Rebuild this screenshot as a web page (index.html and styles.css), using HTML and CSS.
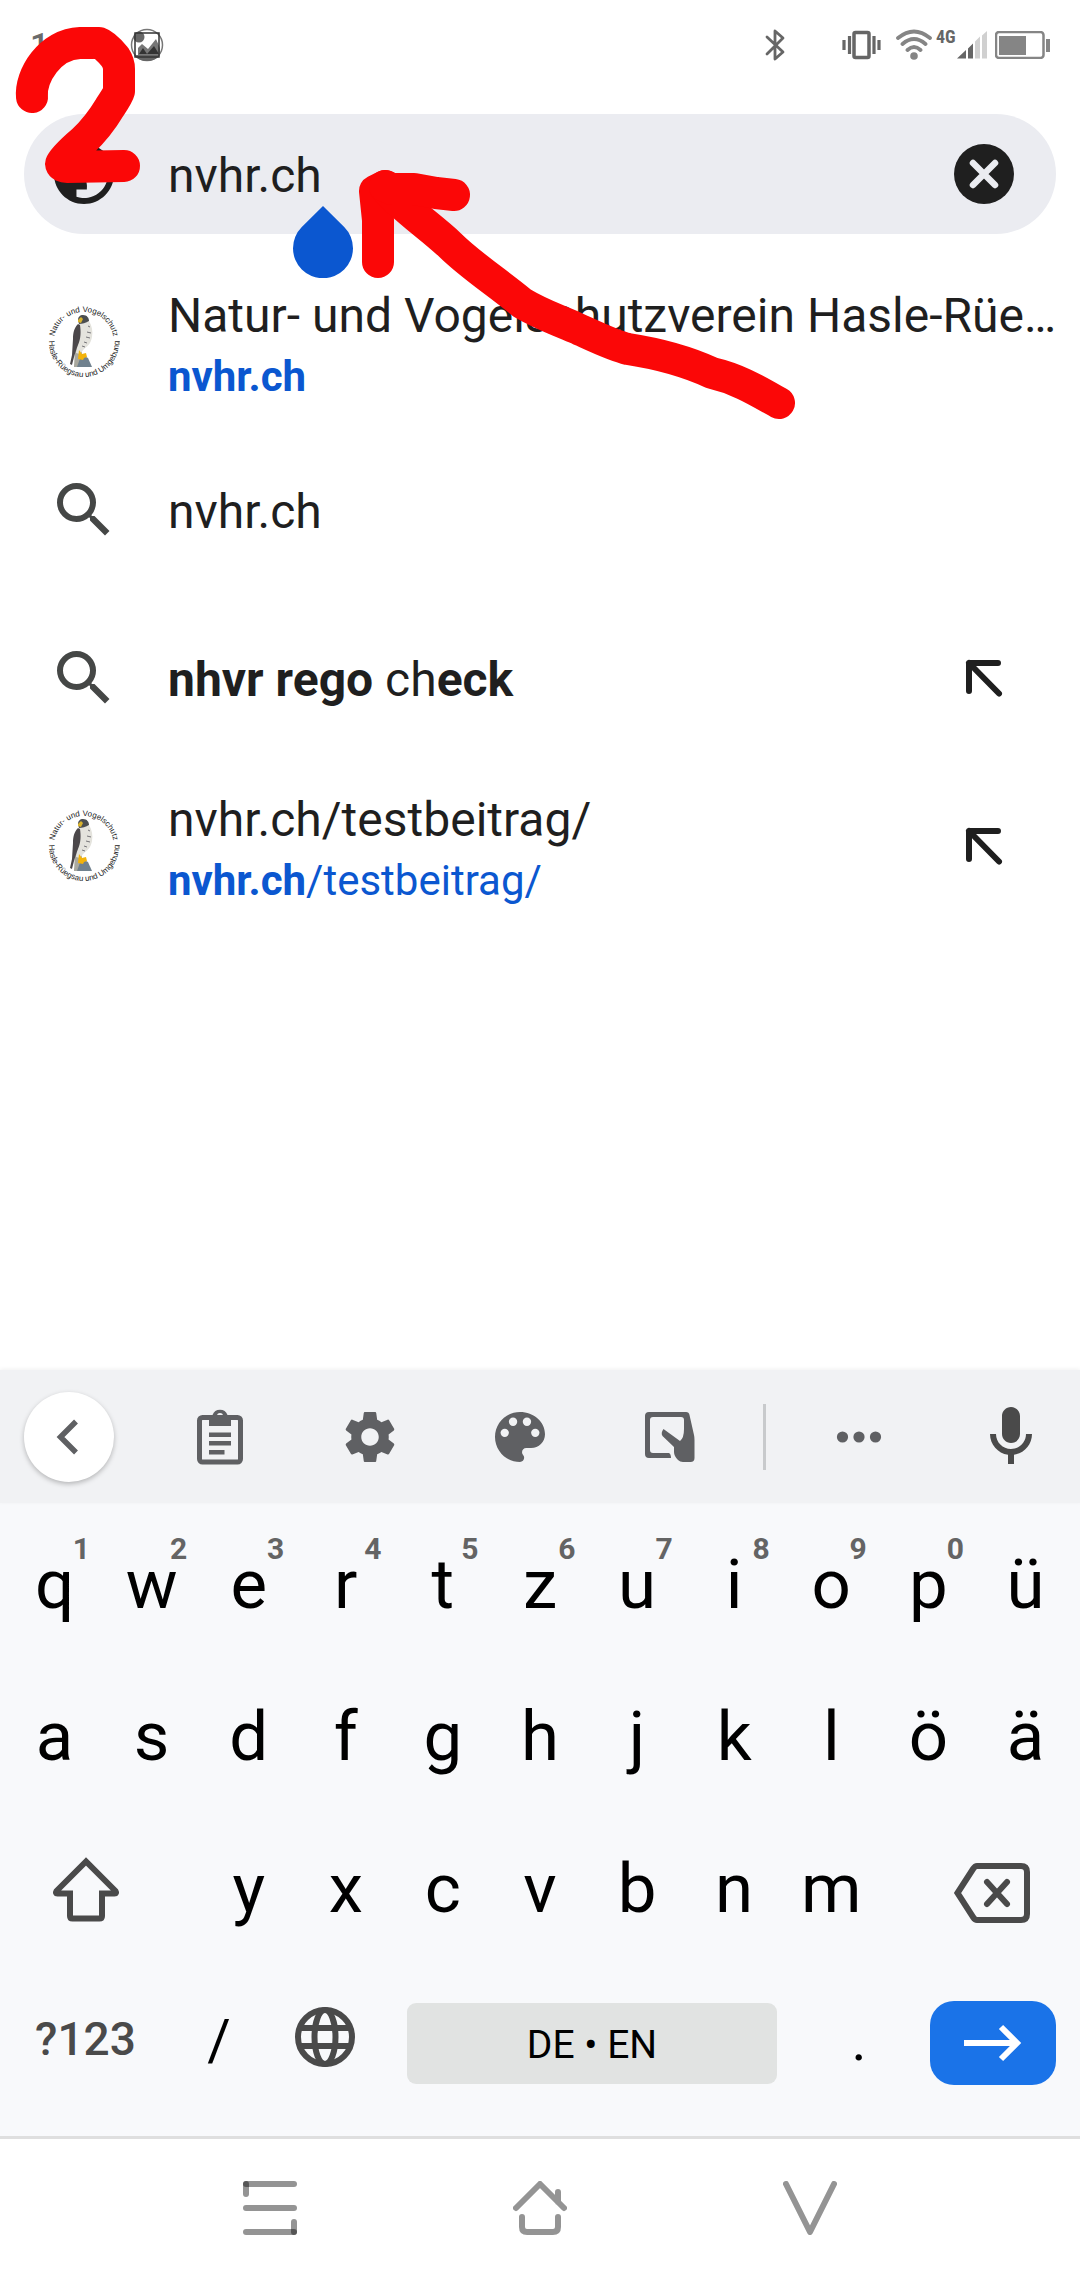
FILE: index.html
```html
<!DOCTYPE html>
<html lang="de">
<head>
<meta charset="utf-8">
<meta name="viewport" content="width=device-width, initial-scale=1">
<title>nvhr.ch</title>
<link rel="stylesheet" href="styles.css">
</head>
<body>
<svg class="defs" aria-hidden="true">
  <defs>
    <symbol id="search" viewBox="0 0 24 24"><path d="M15.500 14h-.79l-.28-.27A6.471 6.471 0 0 0 16 9.500 6.500 6.500 0 1 0 9.500 16c1.610 0 3.090-.59 4.230-1.570l.27.28v.79l5 4.990L20.490 19l-4.990-5zm-6 0C7.010 14 5 11.990 5 9.500S7.010 5 9.500 5 14 7.010 14 9.500 11.990 14 9.500 14z"/></symbol>
    <symbol id="refine" viewBox="0 0 72 72"><path d="M50 21H21v28M21 21l30 30.500" fill="none" stroke="currentColor" stroke-width="6" stroke-linecap="round" stroke-linejoin="round"/></symbol>
    <symbol id="falcon" viewBox="0 0 72 72">
      <path id="arc-top" d="M6 36a30 30 0 0 1 60 0" fill="none"/>
      <path id="arc-bottom" d="M1 36a35 35 0 0 0 70 0" fill="none"/>
      <text class="seal"><textPath href="#arc-top" startOffset="50%">Natur- und Vogelschutz</textPath></text>
      <text class="seal"><textPath href="#arc-bottom" startOffset="50%">Hasle-Rüegsau und Umgebung</textPath></text>
      <path d="M26 61l2-8 6-4 6 3 4 9z" fill="#70818e"/>
      <path d="M26 61l1-18 6-3 1 7-5 14z" fill="#aaa99f"/>
      <path d="M31 18l10-3c3 5 4 10 3 16-1 6-4 9-8 12l-4 5-4-1 1-12z" fill="#e4e3dd"/>
      <path d="M40 20l2 1m-3 5l4 1m-5 4l4 1m-6 4l3 1m-5 3l3 1" stroke="#77767a" stroke-width="1"/>
      <path d="M30 18c-4 4-5 9-5 15l-1 16-2 9 2 1c2-8 3-12 6-20 3-7 3-13 2-20z" fill="#4b474a"/>
      <path d="M30 14c0-3 2-5 5-5 4 0 6 3 6 6-3 2-7 3-10 3z" fill="#4b4e50"/>
      <path d="M30 14l3-3 2 2-2 4-3-1z" fill="#d9b32d"/>
      <path d="M31 44l3 4 4-1 1 4-3 1-1 2-5-1z" fill="#f3b30b"/>
    </symbol>
  </defs>
</svg>

<header class="status">
  <div class="status-left">
    <time class="clock">1</time>
    <svg width="34" height="34" viewBox="0 0 34 34" aria-label="Bild"><circle cx="17" cy="17" r="15.500" fill="#fff" stroke="#777" stroke-width="1.500"/><path d="M4 27h26c-6 8-20 8-26 0z" fill="#666"/><circle cx="9" cy="9" r="5.500" fill="#666"/><path d="M8 27v-7l4-4 6 5 8-10 4 9v7z" fill="#777"/><path d="M9 26l4-6 4 6zm8 0l7-8 5 8z" fill="#333"/><rect x="5" y="5" width="24" height="24" fill="none" stroke="#333" stroke-width="1.500"/></svg>
  </div>
  <div class="status-right">
    <svg class="bluetooth" width="20" height="32" viewBox="0 0 20 32" aria-label="Bluetooth"><path d="M2 8l16 15-8 7V2l8 7L2 25" fill="none" stroke="#666" stroke-width="2.800" stroke-linejoin="round" stroke-linecap="round"/></svg>
    <svg class="vibrate" width="40" height="30" viewBox="0 0 40 30" aria-label="Vibration"><rect x="13" y="2.500" width="15" height="25" rx="1.500" fill="none" stroke="#666" stroke-width="3.500"/><path d="M8.500 6v18M33 6v18M3 10v10M38 10v10" stroke="#666" stroke-width="3.200"/></svg>
    <svg width="38" height="32" viewBox="0 0 38 32" aria-label="WLAN"><g fill="none" stroke="#858585" stroke-width="3.800" stroke-linecap="round"><path d="M3 9q16-13 32 0M7.500 15q11.500-10 23 0M12.500 21q6.500-6 13 0"/></g><circle cx="19" cy="27" r="3.800" fill="#858585"/></svg>
    <span class="network">4G</span>
    <svg class="signal" width="30" height="28" viewBox="0 0 30 28" aria-label="Signal"><path d="M0 27.500l9-8.500v8.500zM11 17.500l5-5v15h-5z" fill="#666"/><path d="M18 10.500l5-5v22h-5zM25 4.500L30 0v27.500h-5z" fill="#d0d0d0"/></svg>
    <svg width="56" height="28" viewBox="0 0 56 28" aria-label="Akku"><rect x="1" y="1" width="47.500" height="26" rx="3" fill="none" stroke="#858585" stroke-width="2.500"/><path d="M4 5h27v19H4zM51 8h4v13h-4z" fill="#858585"/></svg>
  </div>
</header>

<main class="page">
  <form class="omnibox">
    <svg class="icon-72" viewBox="0 0 24 24" aria-hidden="true"><path fill-rule="evenodd" d="M12 2C6.480 2 2 6.480 2 12s4.480 10 10 10 10-4.480 10-10S17.520 2 12 2zM4 12h4.400c3.407.022 4.922 1.730 4.543 5.127H9.488v2.470a8.004 8.004 0 0 0 10.498-8.080C19.327 12.500 18.332 13 17 13c-2.137 0-3.205-.916-3.205-2.750h-3.748c-.274-2.728.683-4.092 2.870-4.092 0-.975.327-1.597.811-1.970A8 8 0 0 0 4 12z"/></svg>
    <input class="url" type="text" value="nvhr.ch" aria-label="Adresse">
    <button class="clear" type="button" aria-label="Löschen"><svg width="60" height="60" viewBox="0 0 60 60"><circle cx="30" cy="30" r="30" fill="#1f1f1f"/><path d="M19 19l22 22M41 19L19 41" stroke="#ebecf1" stroke-width="6.500" stroke-linecap="round"/></svg></button>
    <svg class="handle" width="60" height="72" viewBox="0 0 60 72" aria-hidden="true"><path d="M30 0l21.200 21A30 30 0 1 1 8.800 21z" fill="#0b57d0"/></svg>
  </form>

  <ul class="suggestions">
    <li class="suggestion">
      <svg class="icon-72" aria-hidden="true"><use href="#falcon"/></svg>
      <a class="match" href="#"><span class="title">Natur- und Vogelschutzverein Hasle-Rüe…</span><span class="address"><b>nvhr.ch</b></span></a>
    </li>
    <li class="suggestion">
      <svg class="icon-72" aria-hidden="true"><use href="#search"/></svg>
      <a class="match" href="#"><span class="title">nvhr.ch</span></a>
    </li>
    <li class="suggestion">
      <svg class="icon-72" aria-hidden="true"><use href="#search"/></svg>
      <a class="match" href="#"><span class="title"><b>nhvr rego</b> ch<b>eck</b></span></a>
      <button class="refine" type="button" aria-label="Übernehmen"><svg class="icon-72"><use href="#refine"/></svg></button>
    </li>
    <li class="suggestion">
      <svg class="icon-72" aria-hidden="true"><use href="#falcon"/></svg>
      <a class="match" href="#"><span class="title">nvhr.ch/testbeitrag/</span><span class="address"><b>nvhr.ch</b>/testbeitrag/</span></a>
      <button class="refine" type="button" aria-label="Übernehmen"><svg class="icon-72"><use href="#refine"/></svg></button>
    </li>
  </ul>
</main>

<section class="keyboard" aria-label="Tastatur">
  <div class="toolbar">
    <button class="tool collapse" type="button" aria-label="Zurück"><svg width="60" height="60" viewBox="0 0 60 60"><path d="M37 14.500L21.500 30 37 45.500" fill="none" stroke="#5f6063" stroke-width="5.500"/></svg></button>
    <button class="tool" type="button" aria-label="Zwischenablage"><svg width="60" height="60" viewBox="0 0 60 60"><rect x="9.500" y="10.500" width="41" height="44.500" rx="3" fill="none" stroke="currentColor" stroke-width="5"/><path fill-rule="evenodd" d="M19 19V8h3.500a8 8 0 0 1 15 0H41v11zM30 6a3 3 0 1 0 0 6 3 3 0 0 0 0-6z"/><path d="M19 25.500h22v4.500H19zM19 34h22v4.500H19zM19 43h15.500v4.500H19z"/></svg></button>
    <button class="tool" type="button" aria-label="Einstellungen"><svg width="60" height="60" viewBox="0 0 24 24"><path d="M19.430 12.980c.04-.32.07-.64.07-.98s-.03-.66-.07-.98l2.110-1.650c.19-.15.24-.42.12-.64l-2-3.460c-.12-.22-.39-.3-.61-.22l-2.490 1c-.52-.4-1.080-.73-1.690-.98l-.38-2.650C14.460 2.180 14.250 2 14 2h-4c-.25 0-.46.18-.49.42l-.38 2.650c-.61.25-1.170.59-1.690.98l-2.490-1c-.23-.09-.49 0-.61.22l-2 3.460c-.13.22-.07.49.12.64l2.110 1.650c-.04.32-.07.65-.07.98s.03.66.07.98l-2.110 1.650c-.19.15-.24.42-.12.64l2 3.460c.12.22.39.3.61.22l2.490-1c.52.4 1.080.73 1.690.98l.38 2.650c.03.24.24.42.49.42h4c.25 0 .46-.18.49-.42l.38-2.650c.61-.25 1.170-.59 1.690-.98l2.490 1c.23.09.49 0 .61-.22l2-3.460c.12-.22.07-.49-.12-.64l-2.110-1.650zM12 15.500c-1.930 0-3.500-1.570-3.500-3.500s1.570-3.500 3.500-3.500 3.500 1.570 3.500 3.500-1.570 3.500-3.500 3.500z"/></svg></button>
    <button class="tool" type="button" aria-label="Design"><svg width="60" height="60" viewBox="1.200 1.200 21.600 21.600"><path d="M12 3c-4.970 0-9 4.030-9 9s4.030 9 9 9c.83 0 1.500-.67 1.500-1.500 0-.39-.15-.74-.39-1.010-.23-.26-.38-.61-.38-.99 0-.83.67-1.500 1.500-1.500H16c2.760 0 5-2.240 5-5 0-4.420-4.030-8-9-8z"/><g fill="#f1f2f4"><circle cx="6.500" cy="10.500" r="1.500"/><circle cx="9.500" cy="6.500" r="1.500"/><circle cx="14.500" cy="6.500" r="1.500"/><circle cx="17.500" cy="10.500" r="1.500"/></g></svg></button>
    <button class="tool" type="button" aria-label="Handschrift"><svg width="60" height="60" viewBox="0 0 60 60"><path d="M31 51H9q-4 0-4-4V9q0-4 4-4h37q3 0 3.500 3L54 28q.5 2 .5 5v18q0 4-4 4H43q-3 0-5-2-4-4-4-8v-5L22.500 29q-2-3 1-7L40 34q4-3 4-12V13q0-3-3-3H13q-3 0-3 3v30q0 3 3 3h16q2 1 2 5z"/></svg></button>
    <span class="divider"></span>
    <button class="tool" type="button" aria-label="Mehr"><svg width="60" height="60" viewBox="0 0 60 60"><circle cx="13.500" cy="30" r="5.600"/><circle cx="30" cy="30" r="5.600"/><circle cx="46.500" cy="30" r="5.600"/></svg></button>
    <button class="tool mic" type="button" aria-label="Spracheingabe"><svg class="icon-72" viewBox="0 0 24 24"><path d="M12 14c1.660 0 3-1.340 3-3V5c0-1.660-1.340-3-3-3S9 3.340 9 5v6c0 1.660 1.340 3 3 3zM17 11c0 2.760-2.240 5-5 5s-5-2.240-5-5H5c0 3.530 2.610 6.430 6 6.920V21h2v-3.080c3.390-.49 6-3.390 6-6.920h-2z"/></svg></button>
  </div>

  <div class="keys">
    <div class="row">
      <button class="key" type="button">q<small class="hint">1</small></button>
      <button class="key" type="button">w<small class="hint">2</small></button>
      <button class="key" type="button">e<small class="hint">3</small></button>
      <button class="key" type="button">r<small class="hint">4</small></button>
      <button class="key" type="button">t<small class="hint">5</small></button>
      <button class="key" type="button">z<small class="hint">6</small></button>
      <button class="key" type="button">u<small class="hint">7</small></button>
      <button class="key" type="button">i<small class="hint">8</small></button>
      <button class="key" type="button">o<small class="hint">9</small></button>
      <button class="key" type="button">p<small class="hint">0</small></button>
      <button class="key" type="button">ü</button>
    </div>
    <div class="row">
      <button class="key" type="button">a</button>
      <button class="key" type="button">s</button>
      <button class="key" type="button">d</button>
      <button class="key" type="button">f</button>
      <button class="key" type="button">g</button>
      <button class="key" type="button">h</button>
      <button class="key" type="button">j</button>
      <button class="key" type="button">k</button>
      <button class="key" type="button">l</button>
      <button class="key" type="button">ö</button>
      <button class="key" type="button">ä</button>
    </div>
    <div class="row">
      <button class="key shift" type="button" aria-label="Umschalt"><svg class="icon-72" viewBox="0 0 72 72"><path d="M36 7.500L6.500 37q-1.500 2.500 1 2.500H20V62q0 2.500 2.500 2.500h27q2.500 0 2.500-2.500V39.500h12.500q2.500 0 1-2.500z" fill="none" stroke="currentColor" stroke-width="6"/></svg></button>
      <button class="key" type="button">y</button>
      <button class="key" type="button">x</button>
      <button class="key" type="button">c</button>
      <button class="key" type="button">v</button>
      <button class="key" type="button">b</button>
      <button class="key" type="button">n</button>
      <button class="key" type="button">m</button>
      <button class="key backspace" type="button" aria-label="Rücktaste"><svg width="80" height="72" viewBox="0 0 80 72"><path d="M5.500 39l15.500-24q2-3 4-3H69q6 0 6 6v42q0 6-6 6H25q-2 0-4-3z" fill="none" stroke="currentColor" stroke-width="6"/><path d="M35 28l20 22M55 28L35 50" stroke="currentColor" stroke-width="6" stroke-linecap="round"/></svg></button>
    </div>
    <div class="row bottom">
      <button class="key symbols" type="button">?123</button>
      <button class="key mark" type="button">/</button>
      <button class="key globe" type="button" aria-label="Sprache"><svg width="60" height="66" viewBox="0 0 60 66"><g fill="none" stroke="currentColor" stroke-width="6"><circle cx="30" cy="30" r="27"/><ellipse cx="30" cy="30" rx="10.500" ry="27"/><path d="M5 21h50M5 39h50"/></g></svg></button>
      <div class="slot"><button class="space" type="button">DE • EN</button></div>
      <button class="key mark" type="button">.</button>
      <div class="slot enter-slot"><button class="enter" type="button" aria-label="Los"><svg class="icon-72" viewBox="0 0 72 72"><path d="M7 36h53M44 20l16 16-16 16" fill="none" stroke="#fff" stroke-width="6"/></svg></button></div>
    </div>
  </div>
</section>

<nav class="navbar">
  <button class="nav-button" type="button" aria-label="Übersicht"><svg width="54" height="54" viewBox="0 0 54 54"><path d="M3 3h48"/><path d="M3 3v10"/><path d="M3 27h48"/><path d="M3 51h48"/><path d="M51 41v10"/></svg></button>
  <button class="nav-button" type="button" aria-label="Startseite"><svg width="54" height="54" viewBox="0 0 54 54"><path d="M3 27L27 3l24 24M45 11v10"/><path d="M9 36v10q0 5 5 5h26q5 0 5-5V36"/></svg></button>
  <button class="nav-button" type="button" aria-label="Zurück"><svg width="54" height="54" viewBox="0 0 54 54"><path d="M3 3l24 48L51 3"/></svg></button>
</nav>

<svg class="markup" width="820" height="440" viewBox="0 0 820 440" aria-hidden="true">
  <g fill="none" stroke="#fb0707" stroke-width="32" stroke-linecap="round" stroke-linejoin="round">
    <path d="M32 97C30 76 50 44 80 43h19q6 2 16 14 4 6 4 12v22q-1 4-9 16-12 20-27 34-20 17-22 23 1 3 6 3l57-1"/>
    <path d="M378 262v-42l-3-29 10-5"/>
    <path d="M385 187C400 206 430 226 450 245c20 20 48 38 72 58 20 12 34 16 54 25 22 10 38 18 52 21 26 4 58 12 84 24 26 6 44 17 67 30"/>
    <path d="M385 186l7 3h22l22 4 18 2"/>
  </g>
</svg>
</body>
</html>
```

FILE: styles.css
```css
* {
  box-sizing: border-box;
}

body {
  position: relative;
  display: flex;
  flex-direction: column;
  min-height: 100vh;
  margin: 0;
  background: #fff;
  color: #1f1f1f;
  font-family: Roboto, "Liberation Sans", sans-serif;
}

button {
  display: flex;
  align-items: center;
  justify-content: center;
  margin: 0;
  padding: 0;
  border: 0;
  background: none;
  color: inherit;
  font: inherit;
}

svg {
  display: block;
  flex: none;
  fill: currentColor;
}

.defs {
  position: absolute;
  width: 0;
  height: 0;
}

.icon-72 {
  width: 72px;
  height: 72px;
}

/* Status bar */
.status {
  display: flex;
  align-items: center;
  justify-content: space-between;
  height: 90px;
  padding: 0 29px 0 30px;
}

.status-left,
.status-right {
  display: flex;
  align-items: center;
}

.clock {
  width: 100px;
  color: #6b6b6b;
  font-size: 34px;
  font-weight: 500;
}

.bluetooth {
  margin-right: 56px;
}

.vibrate {
  margin-right: 14px;
}

.network {
  align-self: flex-start;
  width: 24px;
  padding-left: 3px;
  color: #666;
  font-family: "Roboto Condensed", "Liberation Sans Narrow", Roboto, sans-serif;
  font-size: 18px;
  font-weight: 700;
  line-height: 16px;
}

.signal {
  margin-right: 8px;
}

/* Address bar */
.page {
  flex: 1;
  padding-top: 24px;
}

.omnibox {
  position: relative;
  display: flex;
  align-items: center;
  height: 120px;
  margin: 0 24px;
  padding: 0 42px 0 24px;
  border-radius: 60px;
  background: #ebecf1;
}

.url {
  flex: 1;
  min-width: 0;
  height: 72px;
  margin-left: 48px;
  padding: 3px 0 0;
  border: 0;
  outline: 0;
  background: none;
  color: inherit;
  font: inherit;
  font-size: 48px;
}

.handle {
  position: absolute;
  top: 92px;
  left: 269px;
}

/* Suggestions */
.suggestions {
  margin: 24px 0 0;
  padding: 0;
  list-style: none;
}

.suggestion {
  display: flex;
  align-items: center;
  height: 168px;
  padding: 0 24px 0 48px;
}

.suggestion > svg {
  color: #454746;
}

.match {
  flex: 1;
  min-width: 0;
  margin-left: 48px;
  padding-top: 3px;
  color: inherit;
  text-decoration: none;
}

.title,
.address {
  display: block;
  white-space: nowrap;
}

.title {
  font-size: 48px;
  line-height: 66px;
}

.address {
  color: #0b57d0;
  font-size: 42px;
  line-height: 56px;
}

.refine {
  margin-right: 36px;
}

.seal {
  fill: #222;
  font-family: "Liberation Sans", sans-serif;
  font-size: 8px;
  text-anchor: middle;
}

/* Keyboard */
.keyboard {
  background: #f8f9fb;
}

.toolbar {
  display: grid;
  grid-template-columns: 145fr repeat(4, 150fr) 39fr 150fr 146fr;
  align-items: center;
  height: 133px;
  background: #f1f2f4;
  box-shadow: 0 -1px 4px rgba(0, 0, 0, 0.06);
  color: #5f6063;
}

.tool {
  height: 90px;
}

.collapse {
  width: 90px;
  margin-left: 24px;
  border-radius: 50%;
  background: #fff;
  box-shadow: 0 2px 5px rgba(0, 0, 0, 0.25);
}

.mic {
  justify-self: end;
  width: 90px;
  margin-right: 24px;
  color: #4a4a4a;
}

.divider {
  justify-self: center;
  width: 3px;
  height: 66px;
  background: #c8cacc;
}

.keys {
  padding: 5px 0 20px;
}

.row {
  display: grid;
  grid-template-columns: repeat(11, 1fr);
  height: 152px;
  padding: 0 6px;
}

.key {
  position: relative;
  color: #000;
  font-size: 69px;
}

.hint {
  position: absolute;
  top: 23px;
  right: 13px;
  color: #646464;
  font-size: 30px;
  font-weight: 700;
  line-height: 36px;
}

.shift,
.backspace {
  grid-column: span 2;
  color: #4a4a4a;
}

.shift {
  padding: 4px 34px 0 0;
}

.backspace {
  padding: 4px 0 0 30px;
}

.bottom {
  grid-template-columns: 171fr 96fr 116fr 418fr 116fr 163fr;
  padding: 0;
}

.symbols {
  padding-bottom: 3px;
  color: #4a4a4a;
  font-size: 46px;
  font-weight: 500;
}

.mark {
  font-size: 57px;
}

.globe {
  color: #4a4a4a;
}

.slot {
  display: flex;
  align-items: center;
  padding: 6px 24px 0;
}

.space {
  flex: 1;
  height: 81px;
  padding-top: 3px;
  border-radius: 9px;
  background: #e1e3e2;
  color: #000;
  font-size: 39px;
}

.enter-slot {
  padding-left: 13px;
}

.enter {
  flex: 1;
  height: 84px;
  border-radius: 24px;
  background: #1a73e8;
}

/* System navigation */
.navbar {
  display: grid;
  grid-template-columns: repeat(3, 1fr);
  height: 144px;
  padding: 0 12.5% 4px;
  border-top: 3px solid #dfdfdf;
}

.nav-button path {
  fill: none;
  stroke: rgba(0, 0, 0, 0.42);
  stroke-width: 6px;
  stroke-linecap: round;
  stroke-linejoin: round;
}

/* Hand-drawn marker strokes over the screen */
.markup {
  position: absolute;
  top: 0;
  left: 0;
  pointer-events: none;
}
```
